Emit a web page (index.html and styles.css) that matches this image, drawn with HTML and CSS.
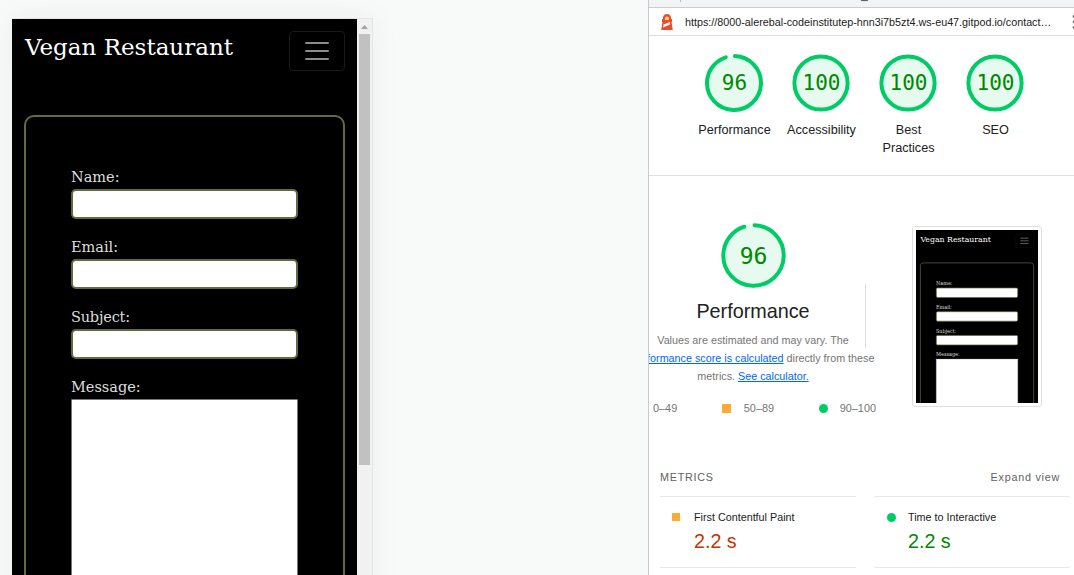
FILE: index.html
```html
<!DOCTYPE html>
<html lang="en">
<head>
<meta charset="utf-8">
<title>Vegan Restaurant</title>
<link rel="stylesheet" href="styles.css">
</head>
<body>
<main class="workspace">
  <section class="stage">
    <div class="device">
      <div class="site">
        <header class="navbar">
          <span class="brand">Vegan Restaurant</span>
          <div class="toggler"><svg width="30" height="30" viewBox="0 0 30 30"><path d="M4 7h22M4 15h22M4 23h22" stroke="#8c8c8c" stroke-width="2" stroke-linecap="round"/></svg></div>
        </header>
        <form class="contact">
          <div class="field"><label class="l-name">Name:</label><div class="box"></div></div>
          <div class="field"><label class="l-email">Email:</label><div class="box"></div></div>
          <div class="field"><label class="l-subject">Subject:</label><div class="box"></div></div>
          <div class="field"><label class="l-message">Message:</label><div class="area"></div></div>
        </form>
      </div>
      <div class="scrollbar">
        <svg class="arrow" width="15" height="15" viewBox="0 0 15 15"><path d="M4 10L7.5 6L11 10z" fill="#a3a3a3"/></svg>
        <div class="thumb"></div>
      </div>
    </div>
  </section>
  <section class="panel">
    <div class="toolbar"><span class="tick"></span><span class="gear"></span></div>
    <div class="urlbar">
      <svg class="lighthouse" width="14" height="16" viewBox="0 0 14 16">
        <path d="M3 5V3Q4 0 7 0T11 3V5H12V8H11.500L12.800 16H1.200L2.500 8H2V5z" fill="#ee4b2b"/>
        <path d="M5 3.500Q7 1.500 9 3.500V6H5z" fill="#ffd777"/>
        <path d="M3.500 10.500L10 8V10.500L3 13.500z" fill="#fff"/>
      </svg>
      <span class="url">https://8000-alerebal-codeinstitutep-hnn3i7b5zt4.ws-eu47.gitpod.io/contact…</span>
      <svg class="kebab" width="4" height="16" viewBox="0 0 4 16" fill="#777"><circle cx="2" cy="2.500" r="1.400"/><circle cx="2" cy="8" r="1.400"/><circle cx="2" cy="13.500" r="1.400"/></svg>
    </div>
    <div class="scores">
      <div class="score"><div class="gauge"><svg viewBox="0 0 58 58"><circle class="disc" cx="29" cy="29" r="28"/><circle class="ring" cx="29" cy="29" r="27" pathLength="100" stroke-dasharray="94.500 5.500" transform="rotate(-88 29 29)"/></svg><span>96</span></div><p>Performance</p></div>
      <div class="score"><div class="gauge"><svg viewBox="0 0 58 58"><circle class="disc" cx="29" cy="29" r="28"/><circle class="ring" cx="29" cy="29" r="26.600"/></svg><span>100</span></div><p>Accessibility</p></div>
      <div class="score"><div class="gauge"><svg viewBox="0 0 58 58"><circle class="disc" cx="29" cy="29" r="28"/><circle class="ring" cx="29" cy="29" r="26.600"/></svg><span>100</span></div><p>Best Practices</p></div>
      <div class="score"><div class="gauge"><svg viewBox="0 0 58 58"><circle class="disc" cx="29" cy="29" r="28"/><circle class="ring" cx="29" cy="29" r="26.600"/></svg><span>100</span></div><p>SEO</p></div>
    </div>
    <div class="category">
      <div class="summary">
        <div class="gauge big"><svg viewBox="0 0 66 66"><circle class="disc" cx="33" cy="33" r="32"/><circle class="ring" cx="33" cy="33" r="30.700" pathLength="100" stroke-dasharray="94.500 5.500" transform="rotate(-88 33 33)"/></svg><span>96</span></div>
        <h1>Performance</h1>
        <p class="about">Values are estimated and may vary. The<br><a>performance score is calculated</a> directly from these<br>metrics. <a>See calculator.</a></p>
        <div class="legend"><span>0–49</span><span><i class="square"></i>50–89</span><span><i class="circle"></i>90–100</span></div>
      </div>
      <div class="rule"></div>
      <div class="shot">
        <div class="crop">
          <div class="site mini">
            <header class="navbar">
              <span class="brand">Vegan Restaurant</span>
              <div class="toggler"><svg width="30" height="30" viewBox="0 0 30 30"><path d="M4 7h22M4 15h22M4 23h22" stroke="#8c8c8c" stroke-width="2" stroke-linecap="round"/></svg></div>
            </header>
            <form class="contact">
              <div class="field"><label class="l-name">Name:</label><div class="box"></div></div>
              <div class="field"><label class="l-email">Email:</label><div class="box"></div></div>
              <div class="field"><label class="l-subject">Subject:</label><div class="box"></div></div>
              <div class="field"><label class="l-message">Message:</label><div class="area"></div></div>
            </form>
          </div>
        </div>
      </div>
    </div>
    <div class="metrics-head"><span>METRICS</span><span>Expand view</span></div>
    <div class="metrics">
      <div class="metric"><i class="square"></i><div><h2>First Contentful Paint</h2><b class="average">2.2 s</b></div></div>
      <div class="metric"><i class="circle"></i><div><h2>Time to Interactive</h2><b class="pass">2.2 s</b></div></div>
    </div>
  </section>
</main>
</body>
</html>
```
FILE: styles.css
```css
* { box-sizing: border-box; }
body { margin: 0; font-family: "Liberation Sans", Arial, sans-serif; color: #212121; }
h1, h2, p { margin: 0; font-weight: normal; }
.workspace { display: grid; grid-template-columns: 648px 426px; height: 575px; overflow: hidden; }

/* Device preview */
.stage { background: #f8faf9; padding: 18px 0 0 12px; overflow: hidden; }
.device { display: flex; width: 361px; height: 700px; border-top: 1px solid #e4e6e5; border-right: 1px solid #e4e6e5; box-shadow: 0 0 30px rgba(0, 0, 0, .05); }
.site { width: 345px; height: 700px; background: #000; padding: 12px; font-family: "Roboto Slab", "DejaVu Serif", serif; overflow: hidden; }
.navbar { display: flex; justify-content: space-between; height: 84px; }
.brand { color: #fff; font-size: 23px; line-height: 32px; white-space: nowrap; padding-left: 1px; }
.toggler { width: 56px; height: 40px; border: 1px solid #1a1a1a; border-radius: 4px; padding: 4px 12px; }
.contact { height: 700px; border: 2px solid #606c3c; border-radius: 10px; padding: 48px 45px; display: flex; flex-direction: column; gap: 16px; }
.field label { display: block; height: 24px; line-height: 24px; font-size: 14.500px; color: #ddd; }
.l-subject { letter-spacing: -.2px; }
.box { height: 30px; background: #fff; border: 2px solid #606c3c; border-radius: 5px; }
.area { height: 300px; background: #fff; border: 1px solid #767676; border-radius: 1px; }
.scrollbar { width: 15px; background: #f1f1f1; }
.arrow { display: block; }
.thumb { width: 11px; height: 431px; margin-left: 2px; background: #c1c1c1; }

/* Audit panel */
.panel { background: #fff; border-left: 1px solid #c8cacd; overflow: hidden; }
.toolbar { display: flex; height: 8px; background: #f1f3f4; border-bottom: 1px solid #cacdd1; }
.tick { width: 1px; height: 2px; margin-left: 31px; background: #bbb; }
.gear { width: 7px; height: 1px; margin-left: 180px; background: #5f6368; border-radius: 0 0 4px 4px; box-shadow: 0 0 1px #5f6368; }
.urlbar { display: flex; align-items: center; height: 28px; border-bottom: 1px solid #dadce0; }
.lighthouse { margin-left: 11px; flex: none; }
.url { margin-left: 11px; width: 367px; font-size: 10.780px; color: #222; white-space: nowrap; }
.kebab { flex: none; margin-left: 21px; }
.scores { display: flex; height: 140px; padding: 18px 0 0 42px; border-bottom: 1px solid #dfdfdf; }
.score { width: 87px; padding: 0 5px; text-align: center; font-size: 12.650px; line-height: 18px; }
.score p { margin: 9px -2px 0; }
.score:nth-child(3) p { padding: 0 8px; }
.gauge { display: grid; place-items: center; width: 58px; height: 58px; margin: 0 0 0 9px; font: 21px "DejaVu Sans Mono", monospace; color: #080; }
.gauge > * { grid-area: 1 / 1; }
.gauge svg { width: 100%; height: 100%; }
.gauge span { padding-left: 1px; }
.disc { fill: #e6faf0; }
.ring { fill: none; stroke: #0c6; stroke-width: 4; stroke-linecap: round; }
.category { display: flex; align-items: flex-start; height: 292px; padding-top: 46px; }
.summary { flex: none; width: 246px; margin-left: -19px; text-align: center; }
.big { width: 65px; height: 65px; margin: 1px 0 0 91px; font-size: 23px; }
.big span { padding: 0; }
.summary h1 { font-size: 19.800px; line-height: 24px; margin-top: 11px; }
.about { margin-top: 8px; font-size: 10.780px; line-height: 18px; color: #757575; white-space: nowrap; }
.about a { color: #0066ff; text-decoration: underline; }
.legend { display: flex; justify-content: space-between; margin: 14px 0 0 23px; font-size: 10.900px; line-height: 18px; color: #757575; }
.legend span { display: flex; align-items: center; }
.legend span:nth-child(3) i { margin-right: 12px; }
.legend span:nth-child(2) i { margin-right: 13px; }
.square { display: block; width: 9px; height: 9px; background: #fa3; }
.circle { display: block; width: 9px; height: 9px; background: #0c6; border-radius: 50%; }
.rule { width: 1px; height: 64px; margin: 62px 0 0 -11px; background: #dfdfdf; }
.shot { width: 130px; height: 181px; margin: 4px 0 0 46px; padding: 3px; border: 1px solid #dfdfdf; border-radius: 3px; }
.crop { width: 122px; height: 173px; overflow: hidden; }
.mini { width: 360px; transform: scale(.339); transform-origin: 0 0; }
.metrics-head { display: flex; justify-content: space-between; height: 28px; padding: 0 14px 0 11px; font-size: 10.780px; line-height: 18px; letter-spacing: .76px; color: #616161; }
.metrics { display: grid; grid-template-columns: 196px 196px; gap: 18px; margin-left: 11px; }
.metric { display: flex; height: 72px; padding: 11px 0 0 12px; border-top: 1px solid #e8e8e8; border-bottom: 1px solid #e8e8e8; }
.metric .circle { flex: none; margin: 5px 12px 0 1px; }
.metric .square { flex: none; width: 8px; height: 8px; margin: 5px 14px 0 0; }
.metric h2 { font-size: 10.780px; line-height: 18px; }
.metric b { display: block; font-weight: normal; font-size: 19.700px; line-height: 24px; margin-top: 3px; }
.average { color: #c33300; }
.pass { color: #080; }
```
